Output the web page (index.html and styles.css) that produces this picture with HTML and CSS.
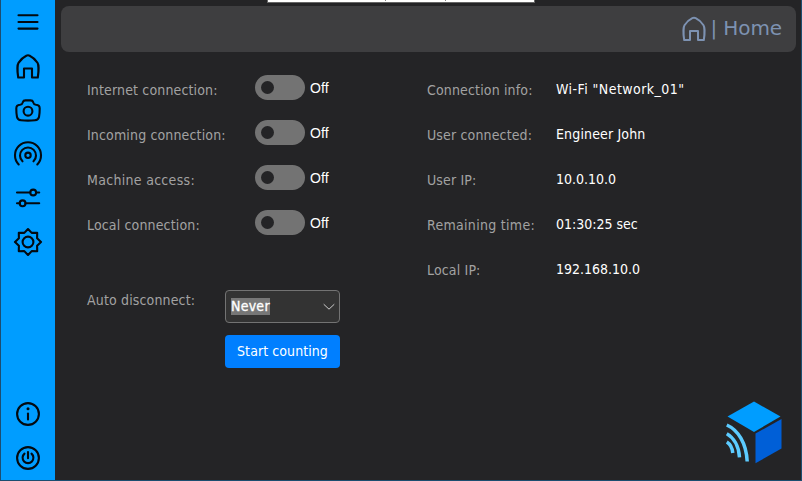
FILE: index.html
```html
<!DOCTYPE html>
<html lang="en">
<head>
<meta charset="utf-8">
<title>Home</title>
<link rel="stylesheet" href="styles.css">
</head>
<body>
<div class="app">
  <div class="top-tab"><i></i><i></i></div>
  <nav class="sidebar">
    <a><svg viewBox="0 0 30 30"><path d="M5.500 8.300h19M5.500 15h19M5.500 21.600h19"/></svg></a>
    <a><svg viewBox="0 0 30 30"><path d="M5.200 26.500C4 19 4.700 13 5.500 11.800C7 9.500 11 5.800 13.300 4.700Q15 3.900 16.700 4.700C19 5.800 23 9.500 24.500 11.800C25.300 13 26 19 24.800 26.500H19V17.500H11V26.500Z"/></svg></a>
    <a><svg viewBox="0 0 30 30"><path d="M7 9.800C9.500 9.500 9.500 8.600 9.900 7C10.200 5.900 11 5.400 12.500 5.400H17.500C19 5.400 19.800 5.900 20.100 7C20.500 8.600 20.500 9.500 23 9.800C25.700 10 26.700 11 26.700 13.500C26.700 17 26.700 19 26 22C25.500 24.500 24.500 25 22 25.300Q15 26 8 25.300C5.500 25 4.500 24.500 4 22C3.300 19 3.300 17 3.300 13.500C3.300 11 4.300 10 7 9.800Z"/><circle cx="15" cy="16.200" r="4.400"/></svg></a>
    <a><svg viewBox="0 0 30 30"><path d="M5.700 25.400A13 13 0 1 1 24.300 25.400M9.500 22.300A8 8 0 1 1 20.500 22.300"/><circle cx="15" cy="16.300" r="2.700"/></svg></a>
    <a><svg viewBox="0 0 30 30"><path d="M4 9.500h13.200M23.200 9.500h3M4 20.300h2.700M12.500 20.300h13.700"/><circle cx="20.200" cy="9.500" r="2.900"/><circle cx="9.600" cy="20.300" r="2.900"/></svg></a>
    <a><svg viewBox="0 0 30 30"><path d="M15 2L18.700 5.900L24.200 5.800L24.100 11.300L28 15L24.100 18.700L24.200 24.200L18.700 24.100L15 28L11.300 24.100L5.800 24.200L5.900 18.700L2 15L5.900 11.300L5.800 5.800L11.300 5.900Z"/><circle cx="15" cy="15" r="5.400"/></svg></a>
    <a class="info"><svg viewBox="0 0 30 30"><circle cx="15" cy="15" r="10.900"/><path d="M15 14.500v6"/><circle class="dot" cx="15" cy="9.800" r="1.500"/></svg></a>
    <a><svg viewBox="0 0 30 30"><circle cx="15" cy="15" r="10.900"/><path d="M15 9v6.200M11.500 10.600A5.400 5.400 0 1 0 18.500 10.600"/></svg></a>
  </nav>
  <main class="main">
    <header class="header">
      <svg viewBox="0 0 30 30"><path d="M5.200 26C4 18.500 4.700 12.500 5.500 11.300C7 9 11 5.300 13.300 4.200Q15 3.400 16.700 4.200C19 5.300 23 9 24.500 11.300C25.300 12.500 26 18.500 24.800 26H19V17H11V26Z"/></svg>
      <span>| Home</span>
    </header>
    <div class="content">
      <section class="controls">
        <div class="row"><span class="label">Internet connection:</span><span class="switch"></span><span class="state">Off</span></div>
        <div class="row"><span class="label">Incoming connection:</span><span class="switch"></span><span class="state">Off</span></div>
        <div class="row"><span class="label wide">Machine access:</span><span class="switch"></span><span class="state">Off</span></div>
        <div class="row"><span class="label">Local connection:</span><span class="switch"></span><span class="state">Off</span></div>
        <div class="auto">
          <span class="label">Auto disconnect:</span>
          <div class="actions">
            <div class="select"><span>Never</span><svg viewBox="0 0 12 8"><path d="M1 1.500L6 6.200L11 1.500"/></svg></div>
            <button>Start counting</button>
          </div>
        </div>
      </section>
      <section class="details">
        <div class="row"><span class="label">Connection info:</span><span class="value network">Wi-Fi "Network_01"</span></div>
        <div class="row"><span class="label">User connected:</span><span class="value user">Engineer John</span></div>
        <div class="row"><span class="label">User IP:</span><span class="value">10.0.10.0</span></div>
        <div class="row"><span class="label wide">Remaining time:</span><span class="value">01:30:25 sec</span></div>
        <div class="row"><span class="label">Local IP:</span><span class="value">192.168.10.0</span></div>
      </section>
    </div>
    <svg class="logo" viewBox="0 0 56 64"><path fill="#009dff" d="M28 .500L54.500 15.500L28 31L1.500 15.500Z"/><path fill="#005fd7" d="M29.500 32.500L55.500 18V47.500L29.500 62.300Z"/><g fill="none" stroke="#5ccbff" stroke-width="3.500" stroke-linecap="butt"><path d="M.800 24C12 29 20.300 42 21.200 60.500"/><path d="M.800 32.700C7.500 36.500 12.800 45 13.500 56.300"/><path d="M.800 41C4 43 6.300 47 6.800 52"/></g></svg>
  </main>
</div>
</body>
</html>
```
FILE: styles.css
```css
* { box-sizing: border-box; }
body {
  margin: 0;
  background: #242426;
  font: 14px/18px "DejaVu Sans Condensed", "DejaVu Sans", sans-serif;
}
.app {
  position: relative;
  display: flex;
  width: 802px;
  height: 481px;
  border: solid #1c4d70;
  border-width: 0 1px 1px;
  overflow: hidden;
}
.top-tab {
  position: absolute;
  top: 0;
  left: 266px;
  width: 268px;
  height: 3px;
  display: flex;
  padding-left: 117px;
  gap: 59px;
  background: #fff;
  border: solid #666;
  border-width: 0 1px 1px;
}
.top-tab i { width: 1px; height: 1px; background: #888; }
.sidebar {
  display: flex;
  flex-direction: column;
  align-items: center;
  width: 54px;
  padding: 7px 0;
  gap: 14px;
  background: #009dff;
}
.sidebar a { height: 30px; }
.sidebar .info { margin-top: auto; }
svg { display: block; fill: none; stroke-linecap: round; stroke-linejoin: round; }
.sidebar svg { width: 30px; height: 30px; stroke: #030a10; stroke-width: 2.1; }
.sidebar .dot { fill: #030a10; stroke: none; }
.main {
  flex: 1;
  display: flex;
  flex-direction: column;
  padding: 6px 5px 0 6px;
}
.header {
  display: flex;
  align-items: center;
  justify-content: flex-end;
  height: 46px;
  padding-right: 14px;
  gap: 2px;
  border-radius: 8px;
  background: #3e3e40;
  color: #7d92b2;
  font: 20px/24px "DejaVu Sans", sans-serif;
}
.header svg { width: 30px; height: 30px; margin: -1px -1px 0 0; stroke: #7d92b2; stroke-width: 2; }
.header span { margin-top: -2px; letter-spacing: -.1px; }
.content { display: flex; padding: 23px 0 0 26px; }
.controls { width: 340px; }
.row { display: flex; height: 45px; }
.label { color: #a2a2a2; padding-top: 6px; letter-spacing: .15px; }
.label.wide { letter-spacing: .3px; }
.controls .row .label { width: 168px; }
.switch {
  width: 50px;
  height: 25px;
  padding: 6px;
  border-radius: 13px;
  background: #737373;
}
.switch::before {
  content: "";
  display: block;
  width: 13px;
  height: 13px;
  border-radius: 50%;
  background: #242426;
}
.state {
  padding: 4px 0 0 5px;
  color: #fff;
  font-family: "Liberation Sans", sans-serif;
  letter-spacing: .1px;
}
.auto { display: flex; padding-top: 35px; }
.auto .label { width: 138px; padding-top: 1px; }
.actions { width: 115px; display: grid; gap: 12px; }
.select {
  display: flex;
  align-items: center;
  justify-content: space-between;
  height: 33px;
  padding: 0 5px;
  border: 1px solid #737373;
  border-radius: 4px;
  background: #333;
  color: #fff;
}
.select span {
  height: 17px;
  line-height: 16px;
  background: #777;
  letter-spacing: .25px;
  -webkit-text-stroke: .3px #fff;
}
.select svg { width: 12px; height: 8px; margin-right: -1px; stroke: #ccc; stroke-width: 1; }
button {
  height: 33px;
  padding: 0 0 2px;
  border: 0;
  border-radius: 4px;
  background: #007fff;
  color: #fff;
  font: inherit;
  letter-spacing: .08px;
}
.details .label { width: 129px; }
.value { padding-top: 5px; color: #fff; }
.network { letter-spacing: .45px; }
.user { letter-spacing: .15px; }
.logo { width: 56px; height: 64px; margin: auto 14px 15px auto; }
```
